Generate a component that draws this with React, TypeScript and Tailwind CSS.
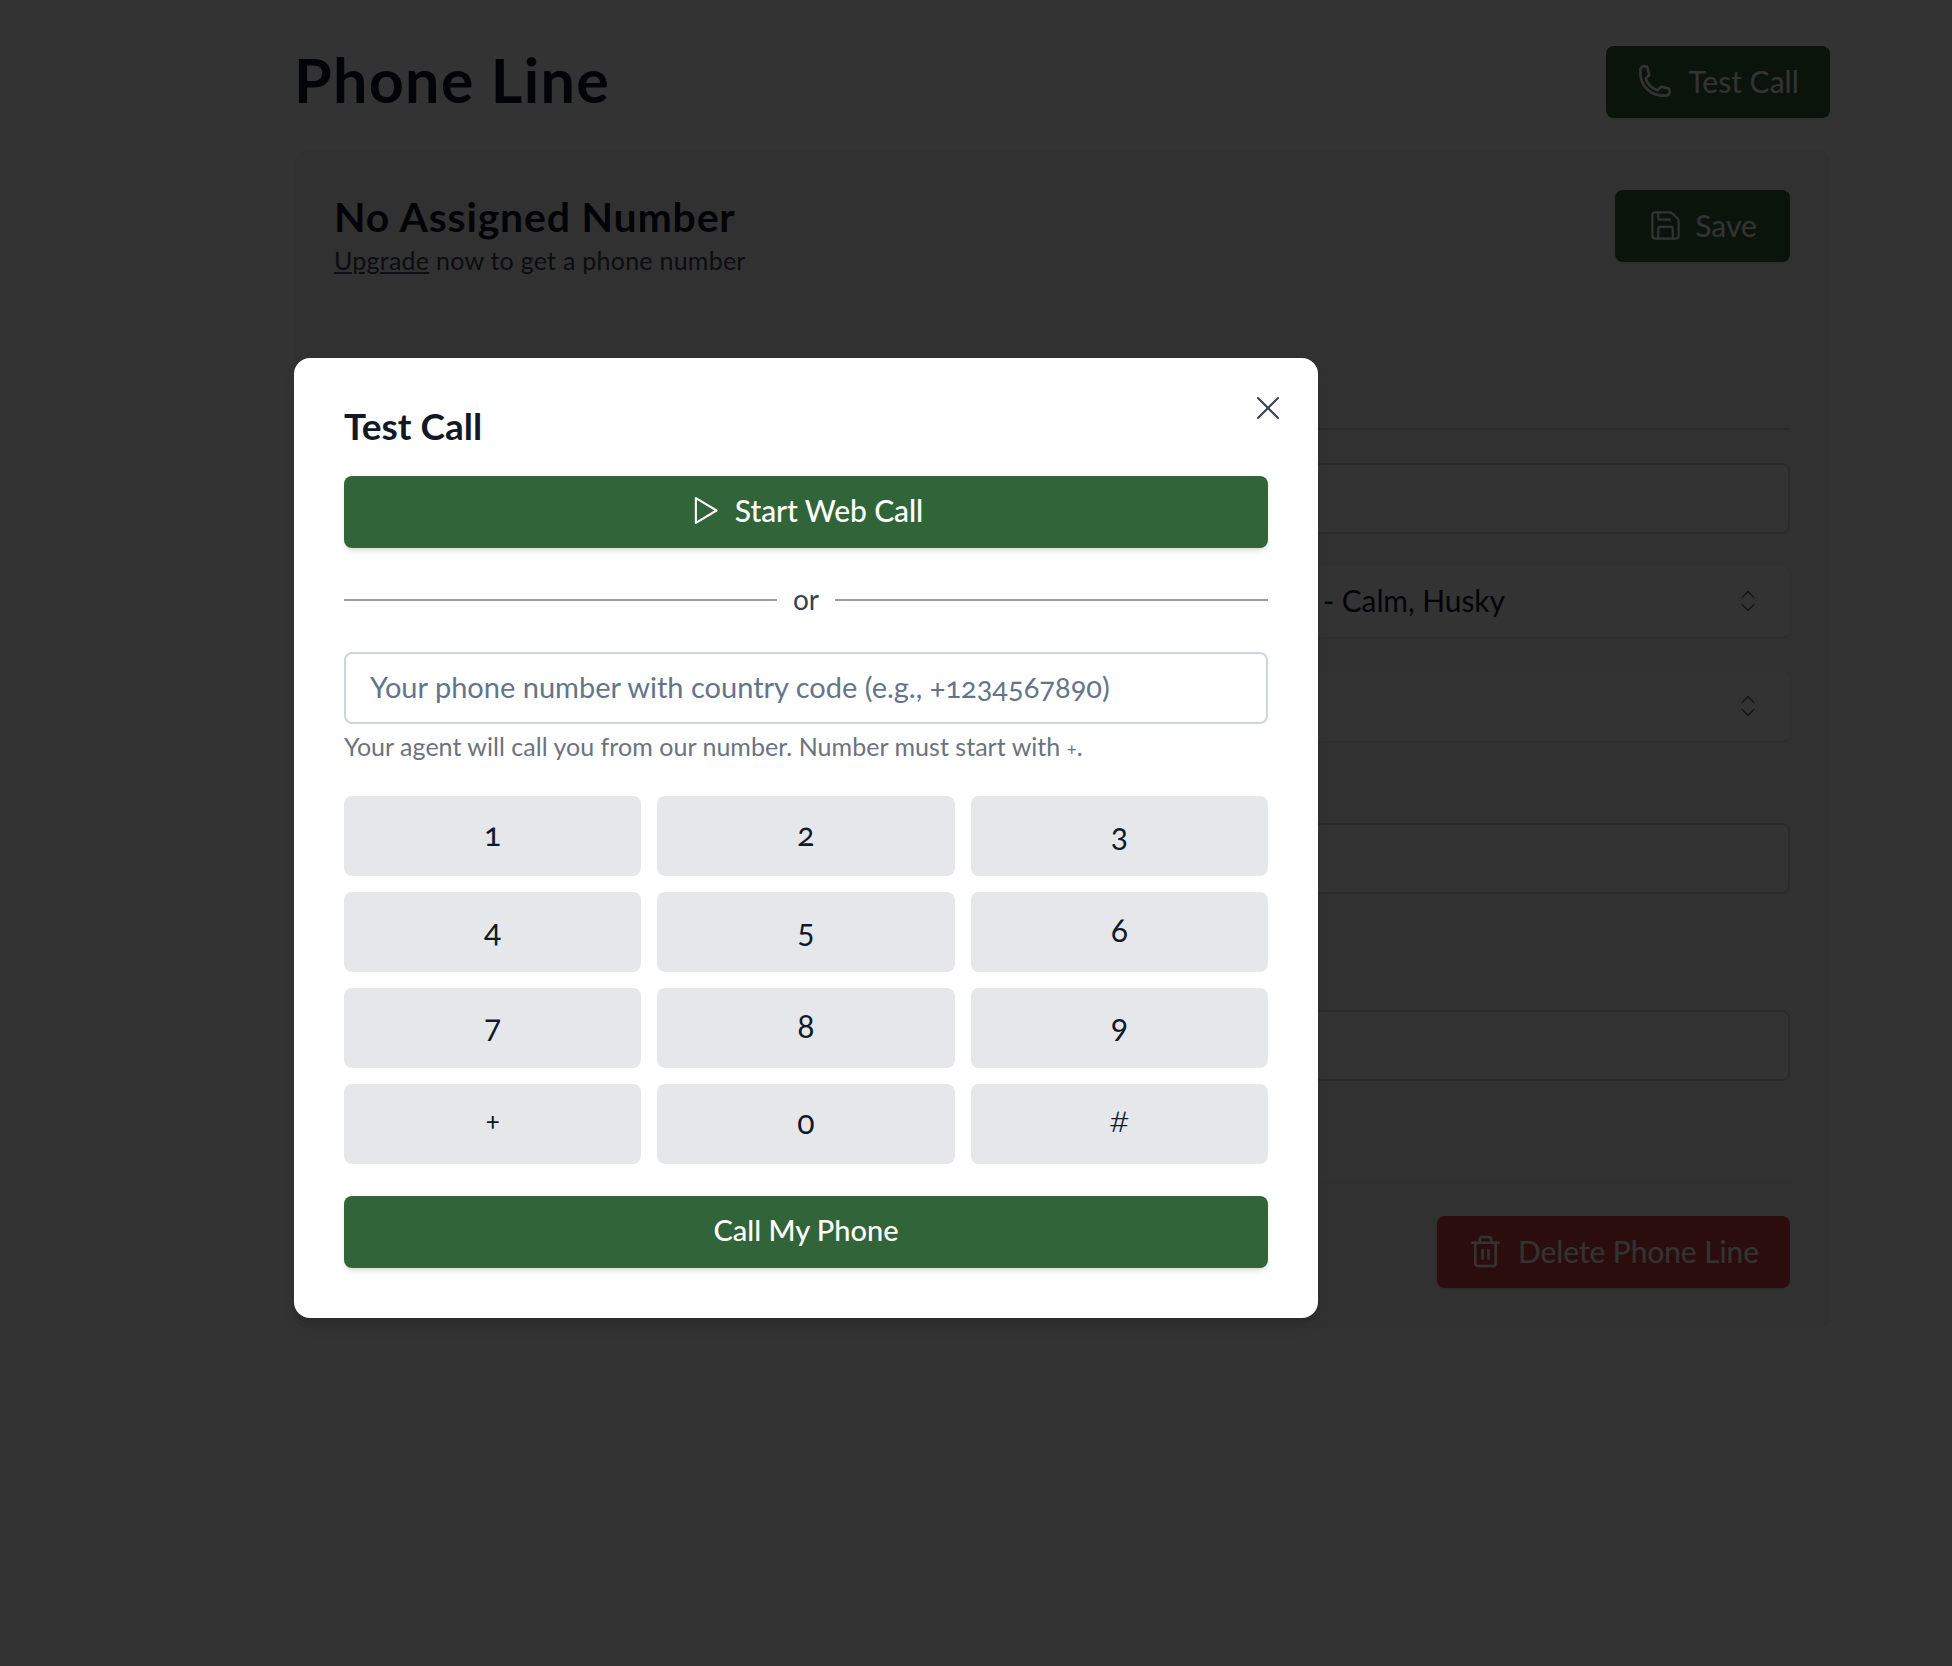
import { ChevronsUpDown, Save, Trash2, X } from "lucide-react";

const FONT = "font-['Lato','Noto_Sans',sans-serif]";

const KEYS = ["1", "2", "3", "4", "5", "6", "7", "8", "9", "+", "0", "#"];

const PhoneIcon = () => (
  <svg viewBox="0 0 24 24" fill="none" stroke="currentColor" strokeWidth="1.75" className="h-[36px] w-[36px]">
    <path
      strokeLinecap="round"
      strokeLinejoin="round"
      d="M2.25 6.75c0 8.284 6.716 15 15 15h2.25a2.25 2.25 0 0 0 2.25-2.25v-1.372c0-.516-.351-.966-.852-1.091l-4.423-1.106c-.44-.11-.902.055-1.173.417l-.97 1.293c-.282.376-.769.542-1.21.38a12.035 12.035 0 0 1-7.143-7.143c-.162-.441.004-.928.38-1.21l1.293-.97c.363-.271.527-.734.417-1.173L6.963 3.102a1.125 1.125 0 0 0-1.091-.852H4.5A2.25 2.25 0 0 0 2.25 4.5v2.25Z"
    />
  </svg>
);

const PlayIcon = () => (
  <svg viewBox="0 0 24 24" fill="none" stroke="currentColor" strokeWidth="1.5" strokeLinejoin="round" className="h-[33px] w-[33px]">
    <polygon points="5 3 20 12 5 21" />
  </svg>
);

const Field = ({ className }: { className: string }) => (
  <div className={`h-[71px] rounded-lg border-2 border-[#d1d5db] bg-white ${className}`} />
);

const SelectField = ({ className, value }: { className: string; value?: string }) => (
  <div className={`flex items-center justify-between rounded-lg bg-white pr-[28px] shadow-sm ${className}`}>
    <span className="pb-[4px] pl-[988px] text-[30px] tracking-[-0.1px] text-[#111827]">{value}</span>
    <ChevronsUpDown className="mb-[2px] h-[28px] w-[28px] text-[#6b7280]" strokeWidth={1.5} />
  </div>
);

const PhoneLinePage = () => (
  <div className="ml-[295px] w-[1535px]">
    <div className="flex items-center justify-between pb-[32px] pt-[46px]">
      <h1 className="-ml-[1px] pb-[4px] text-[61px] font-bold leading-[68px] tracking-[1.3px] text-[#111827]">Phone Line</h1>
      <button className="flex h-[72px] w-[224px] items-center justify-center gap-[15px] rounded-lg bg-[#32643a] pb-[2px] text-[30px] text-white shadow-sm">
        <PhoneIcon />
        Test Call
      </button>
    </div>
    <div className="h-[1176px] rounded-xl bg-[#f5f5f5] px-[40px] pt-[40px] shadow-sm">
      <div className="flex justify-between">
        <div className="-ml-[1px] pb-[2px]">
          <h2 className="text-[41px] font-bold leading-[54px] tracking-[0.8px] text-[#111827]">No Assigned Number</h2>
          <p className="text-[25px] leading-[32px] tracking-[0.25px] text-[#374151]">
            <span className="underline">Upgrade</span> now to get a phone number
          </p>
        </div>
        <button className="flex h-[72px] w-[175px] items-center justify-center gap-[12px] rounded-lg bg-[#32643a] pb-[2px] text-[30px] text-white shadow-sm">
          <Save className="h-[35px] w-[35px]" strokeWidth={1.5} />
          Save
        </button>
      </div>
      <div className="mt-[150px] border-t-2 border-[#d1d5db]" />
      <Field className="mt-[33px]" />
      <SelectField className="mt-[33px] h-[70px]" value="- Calm, Husky" />
      <SelectField className="mt-[35px] h-[69px]" />
      <Field className="mt-[82px]" />
      <Field className="mt-[116px]" />
      <div className="mt-[101px] border-t border-[#e5e7eb]" />
      <div className="mt-[33px] flex justify-end">
        <button className="flex h-[72px] w-[353px] items-center justify-center gap-[15px] rounded-lg bg-[#dc4444] pb-[2px] text-[30px] tracking-[-0.1px] text-white shadow-sm">
          <Trash2 className="h-[35px] w-[35px]" strokeWidth={1.75} />
          Delete Phone Line
        </button>
      </div>
    </div>
  </div>
);

const TestCallModal = () => (
  <div className="absolute left-[294px] top-[358px] w-[1024px] rounded-2xl bg-white p-[50px] shadow-lg">
    <button className="absolute right-[30px] top-[30px] text-[#374151]">
      <X className="h-[40px] w-[40px]" strokeWidth={1.25} />
    </button>
    <h2 className="h-[68px] text-[37px] font-bold leading-[36px] text-[#111827]">Test Call</h2>
    <button className="flex h-[72px] w-full items-center justify-center gap-[13px] rounded-lg bg-[#32643a] pb-[4px] text-[30px] font-medium tracking-[-0.1px] text-white shadow-md">
      <PlayIcon />
      Start Web Call
    </button>
    <div className="mt-[32px] flex h-[40px] items-center gap-[16px]">
      <div className="h-[2px] flex-1 bg-[#9a9cab]" />
      <span className="pb-[3px] text-[28px] leading-[36px] text-[#374151]">or</span>
      <div className="h-[2px] flex-1 bg-[#9a9cab]" />
    </div>
    <input
      readOnly
      placeholder="Your phone number with country code (e.g., +1234567890)"
      className="mt-[32px] h-[72px] w-full rounded-lg border-2 border-[#cbd5e1] px-[24px] pb-[3px] text-[29px] oldstyle-nums placeholder:text-[#64748b]"
    />
    <p className="mt-[6px] text-[25px] leading-[32px] tracking-[0.03px] text-[#6b7280]">
      Your agent will call you from our number. Number must start with <span className="text-[17px] leading-none">+</span>.
    </p>
    <div className="mt-[34px] grid grid-cols-3 gap-[16px]">
      {KEYS.map((key) => (
        <button key={key} className="h-[80px] rounded-lg bg-[#e5e7eb] pb-[4px] text-[32px] oldstyle-nums text-[#111827]">
          {key === "+" ? (
            <span className="relative -top-[4px] text-[26px] leading-none">+</span>
          ) : key === "#" ? (
            <span className="relative -top-[2px] text-[37px] font-light leading-none">#</span>
          ) : (
            key
          )}
        </button>
      ))}
    </div>
    <button className="mt-[32px] h-[72px] w-full rounded-lg bg-[#32643a] pb-[4px] text-[29px] font-medium text-white shadow-md">
      Call My Phone
    </button>
  </div>
);

export default function App() {
  return (
    <div className={`relative h-[1666px] w-[1952px] overflow-hidden bg-white ${FONT}`}>
      <PhoneLinePage />
      <div className="absolute inset-0 bg-black/80" />
      <TestCallModal />
    </div>
  );
}
